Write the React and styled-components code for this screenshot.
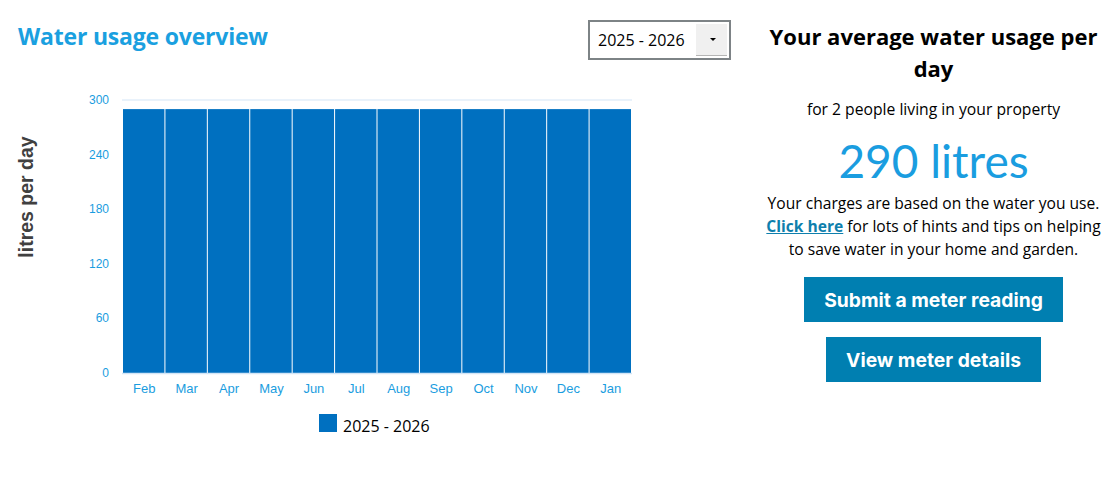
import React from "react";
import styled, { createGlobalStyle } from "styled-components";

const Global = createGlobalStyle`
  html, body { margin: 0; padding: 0; background: #fff; }
  body { font-family: "Open Sans", "Liberation Sans", sans-serif; color: #000; }
`;

const Page = styled.div`
  display: flex;
  width: 1119px;
  height: 483px;
`;

const Left = styled.section`
  width: 748px;
  display: flex;
  flex-direction: column;
  padding-top: 20px;
  box-sizing: border-box;
`;

const Header = styled.div`
  display: flex;
  justify-content: space-between;
  align-items: flex-start;
  padding-left: 18px;
  padding-right: 17px;
  height: 40px;
`;

const Title = styled.h1`
  margin: 0;
  font-size: 23px;
  font-weight: 700;
  color: #1aa0e0;
  letter-spacing: -0.2px;
`;

const Select = styled.div`
  width: 143px;
  height: 40px;
  box-sizing: border-box;
  border: 2px solid #7d8386;
  display: flex;
  align-items: stretch;
  padding: 2px;
`;

const SelectText = styled.div`
  flex: 1;
  display: flex;
  align-items: center;
  padding-left: 6px;
  font-size: 16px;
`;

const SelectButton = styled.div`
  width: 31px;
  background: #f0f0f0;
  border-bottom: 1px solid #b5b5b5;
  display: flex;
  align-items: center;
  justify-content: center;
  &::after {
    content: "";
    margin-left: 3px;
    border-left: 3px solid transparent;
    border-right: 3px solid transparent;
    border-top: 3px solid #000;
  }
`;

const Chart = styled.svg`
  display: block;
  width: 748px;
  height: 390px;
`;

const Right = styled.section`
  width: 371px;
  display: flex;
  flex-direction: column;
  align-items: center;
  text-align: center;
  padding-top: 20px;
  box-sizing: border-box;
`;

const Heading = styled.h2`
  margin: 0;
  font-size: 22px;
  line-height: 32px;
  font-weight: 700;
  width: 340px;
`;

const Sub = styled.p`
  margin: 14px 0 0;
  font-size: 15.7px;
  line-height: 22px;
`;

const Big = styled.div`
  margin-top: 15px;
  font-family: Lato, "Open Sans", sans-serif;
  font-size: 46px;
  line-height: 52px;
  color: #1a9de0;
`;

const Para = styled.p`
  margin: 5px 0 0;
  font-size: 15.6px;
  line-height: 23px;
  width: 345px;
`;

const Link = styled.a`
  color: #0e7fad;
  font-weight: 700;
  text-decoration: underline;
`;

const Buttons = styled.div`
  display: flex;
  flex-direction: column;
  align-items: center;
  gap: 15px;
  margin-top: 16px;
`;

const Button = styled.button`
  border: none;
  background: #007fb1;
  color: #fff;
  font-family: Inter, Lato, "Open Sans", sans-serif;
  font-weight: 700;
  font-size: 19.3px;
  height: 45px;
  padding: 0 20px;
  cursor: pointer;
`;

const months = ["Feb","Mar","Apr","May","Jun","Jul","Aug","Sep","Oct","Nov","Dec","Jan"];
const values = Array(12).fill(290);
const ticks = [0, 60, 120, 180, 240, 300];
const x0 = 123, x1 = 632, yZero = 373, yTop = 100;
const bw = (x1 - x0) / 12;
const yOf = (v) => yZero - (v * (yZero - yTop)) / 300;

function UsageChart() {
  return (
    <Chart viewBox="0 60 748 390">
      {ticks.map((t) => (
        <text key={t} x={109} y={yOf(t) + 4} textAnchor="end" fontFamily="Liberation Sans, Arial, sans-serif" fontSize="12" fill="#1a9de0">{t}</text>
      ))}
      <line x1={x0 - 1} x2={x1} y1={yTop} y2={yTop} stroke="#d3e5f6" strokeWidth="1" />
      {values.map((v, i) => (
        <rect key={i} x={x0 + i * bw} y={yOf(v)} width={bw - 1} height={yZero - yOf(v)} fill="#0070c0" />
      ))}
      <line x1={x0 - 1} x2={x1} y1={yZero + 0.5} y2={yZero + 0.5} stroke="#d3e5f6" strokeWidth="1.5" />
      {months.map((m, i) => (
        <text key={m} x={x0 + i * bw + bw / 2} y={393} textAnchor="middle" fontFamily="Liberation Sans, Arial, sans-serif" fontSize="13" fill="#1a9de0">{m}</text>
      ))}
      <text transform="translate(33 197) rotate(-90)" textAnchor="middle" fontFamily="Liberation Sans, Arial, sans-serif" fontSize="19.5" fontWeight="700" fill="#404040">litres per day</text>
      <rect x={319} y={414} width={18} height={18} fill="#0070c0" />
      <text x={343} y={432} fontFamily="Open Sans, sans-serif" fontSize="16" fill="#000">2025 - 2026</text>
    </Chart>
  );
}

export default function App() {
  return (
    <>
      <Global />
      <Page>
        <Left>
          <Header>
            <Title>Water usage overview</Title>
            <Select>
              <SelectText>2025 - 2026</SelectText>
              <SelectButton />
            </Select>
          </Header>
          <UsageChart />
        </Left>
        <Right>
          <Heading>Your average water usage per day</Heading>
          <Sub>for 2 people living in your property</Sub>
          <Big>290 litres</Big>
          <Para>
            Your charges are based on the water you use. <Link href="#">Click here</Link> for lots of hints and tips on helping to save water in your home and garden.
          </Para>
          <Buttons>
            <Button>Submit a meter reading</Button>
            <Button>View meter details</Button>
          </Buttons>
        </Right>
      </Page>
    </>
  );
}
